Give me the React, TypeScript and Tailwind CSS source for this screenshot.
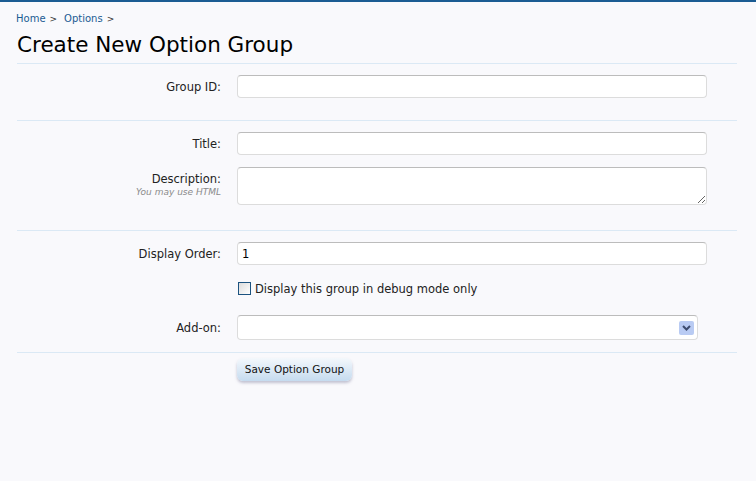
import React from 'react';

const font = { fontFamily: '"DejaVu Sans", Tahoma, sans-serif' };

const inputCls =
  'block h-[23px] w-[470px] rounded-[4px] border border-[#dcdcdc] border-t-[#bcbcbc] bg-white px-[4px] text-[11.5px] text-black outline-none';

const Row: React.FC<{ label: string; hint?: string; top?: boolean; children: React.ReactNode }> = ({ label, hint, top, children }) => (
  <div className={`flex ${top ? 'items-start' : 'items-center'}`}>
    <div className={`w-[220px] pr-[16px] text-right ${top ? 'pt-[5px]' : ''}`}>
      <div className="text-[11.5px] leading-[14px] text-[#222]">{label}</div>
      {hint && <div className="mt-[1px] text-[9px] italic leading-[11px] text-[#8a8a8a]">{hint}</div>}
    </div>
    {children}
  </div>
);

export default function App() {
  return (
    <div className="h-[481px] w-[756px] overflow-hidden bg-[#f9f9fc]" style={font}>
      <div className="h-[2px] bg-[#1b5c93]" />

      <div className="pl-[16px] pr-[19px]">
        {/* breadcrumb */}
        <div className="flex items-center pt-[10px] text-[10px] leading-[14px] text-[#1b5c93]">
          <span>Home</span>
          <span className="ml-[4px] text-[9px] text-[#333]">&gt;</span>
          <span className="ml-[7px]">Options</span>
          <span className="ml-[4px] text-[9px] text-[#333]">&gt;</span>
        </div>

        <h1 className="mt-[5px] pl-[1px] text-[21.5px] leading-[28px] text-black">Create New Option Group</h1>

        <div className="ml-[1px] mt-[4px] border-b border-[#dbe9f5]" />

        {/* section 1 */}
        <div className="ml-[1px] border-b border-[#dbe9f5] pb-[22px] pt-[11px]">
          <Row label="Group ID:">
            <input className={inputCls} />
          </Row>
        </div>

        {/* section 2 */}
        <div className="ml-[1px] border-b border-[#dbe9f5] pb-[25px] pt-[11px]">
          <Row label="Title:">
            <input className={inputCls} />
          </Row>
          <div className="mt-[12px]">
            <Row label="Description:" hint="You may use HTML" top>
              <textarea className={`${inputCls} h-[38px] resize-y`} />
            </Row>
          </div>
        </div>

        {/* section 3 */}
        <div className="ml-[1px] border-b border-[#dbe9f5] pb-[12px] pt-[11px]">
          <Row label="Display Order:">
            <input className={inputCls} defaultValue="1" />
          </Row>
          <div className="mt-[15px] flex items-center pl-[221px]">
            <span className="block h-[13px] w-[13px] border border-[#1c5380] bg-gradient-to-br from-[#dcdcdc] to-white" />
            <span className="ml-[4px] pt-[2px] text-[11.5px] leading-[14px] text-[#222]">Display this group in debug mode only</span>
          </div>
          <div className="mt-[19px]">
            <Row label="Add-on:">
              <div className="flex h-[25px] w-[461px] items-center justify-end rounded-[4px] border border-[#dcdcdc] border-t-[#bcbcbc] bg-white pr-[3px]">
                <span className="flex h-[14px] w-[15px] items-center justify-center rounded-[2px] bg-[#b9cbf3]">
                  <svg width="9" height="6" viewBox="0 0 9 6">
                    <path d="M1 1 L4.5 4.5 L8 1" stroke="#3d4c6e" strokeWidth="2" fill="none" />
                  </svg>
                </span>
              </div>
            </Row>
          </div>
        </div>

        <div className="ml-[221px] mt-[3px]">
          <button className="h-[23px] w-[115px] rounded-[6px] bg-gradient-to-b from-[#f4f8fc] to-[#c5dbef] text-[10.5px] leading-[14px] text-[#111] shadow-[0_2px_3px_rgba(90,90,130,0.35)]">
            Save Option Group
          </button>
        </div>
      </div>
    </div>
  );
}
